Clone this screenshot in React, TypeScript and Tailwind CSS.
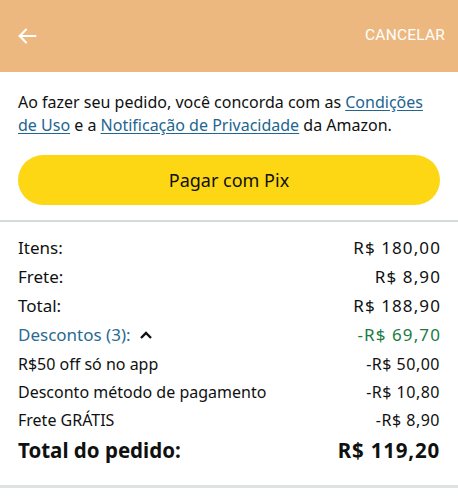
import React from "react";

const font = { fontFamily: '"Noto Sans", "Open Sans", sans-serif' };

function Row({
  label,
  value,
  className = "",
  valueClass = "",
}: {
  label: React.ReactNode;
  value: string;
  className?: string;
  valueClass?: string;
}) {
  return (
    <div className={`flex justify-between items-center ${className}`}>
      <span>{label}</span>
      <span className={valueClass}>{value}</span>
    </div>
  );
}

export default function App() {
  return (
    <div className="w-[458px] h-[500px] bg-white overflow-hidden text-[#0f1111]" style={font}>
      <div className="h-[72px] bg-[#ecb87f] flex items-center justify-between pl-[16px] pr-[13px]">
        <svg width="22" height="22" viewBox="0 0 24 24" fill="none" stroke="white" strokeWidth="2.2" strokeLinecap="square">
          <path d="M21 12H4" />
          <path d="M11 5l-7 7 7 7" strokeLinecap="round" strokeLinejoin="round" />
        </svg>
        <span className="text-white text-[15.5px] tracking-[0.2px]" style={{ fontFamily: "Roboto, sans-serif" }}>
          CANCELAR
        </span>
      </div>

      <div className="px-[18px] pt-[19px]">
        <p className="text-[16px] leading-[23px]">
          Ao fazer seu pedido, você concorda com as{" "}
          <span className="text-[#226590] underline underline-offset-2">Condições de Uso</span> e a{" "}
          <span className="text-[#226590] underline underline-offset-2">Notificação de Privacidade</span> da Amazon.
        </p>
        <div className="mt-[18px] h-[50px] rounded-full bg-[#fdd714] flex items-center justify-center text-[18px]">
          Pagar com Pix
        </div>
      </div>

      <div className="mt-[15px] h-[2px] bg-[#d5dbdb]" />

      <div className="px-[18px] pt-[11px]">
        <div className="text-[17px] leading-[29px]">
          <Row label="Itens:" value="R$ 180,00" valueClass="tracking-[1.1px] -mr-[1px]" />
          <Row label="Frete:" value="R$ 8,90" valueClass="tracking-[1.1px] -mr-[1px]" />
          <Row label="Total:" value="R$ 188,90" valueClass="tracking-[1.1px] -mr-[1px]" />
          <div className="flex justify-between items-center leading-[30px]">
            <span className="text-[#2a6a93] flex items-center gap-[8px]">
              Descontos (3):
              <svg width="14" height="10" viewBox="0 0 14 10" fill="none" stroke="#0f1111" strokeWidth="2.4">
                <path d="M2 8l5-5 5 5" />
              </svg>
            </span>
            <span className="text-[#1b7a43] tracking-[1.1px] -mr-[1px]">-R$ 69,70</span>
          </div>
        </div>
        <div className="text-[16px] leading-[28px]">
          <Row label="R$50 off só no app" value="-R$ 50,00" valueClass="tracking-[0.5px]" />
          <Row label="Desconto método de pagamento" value="-R$ 10,80" valueClass="tracking-[0.5px]" />
          <Row label="Frete GRÁTIS" value="-R$ 8,90" valueClass="tracking-[0.5px]" />
        </div>
        <Row
          className="text-[20.5px] font-bold leading-[32px]"
          label="Total do pedido:"
          value="R$ 119,20"
          valueClass="tracking-[0.8px]"
        />
      </div>

      <div className="mt-[19px] h-[3px] bg-[#dfe2e2]" />
    </div>
  );
}
